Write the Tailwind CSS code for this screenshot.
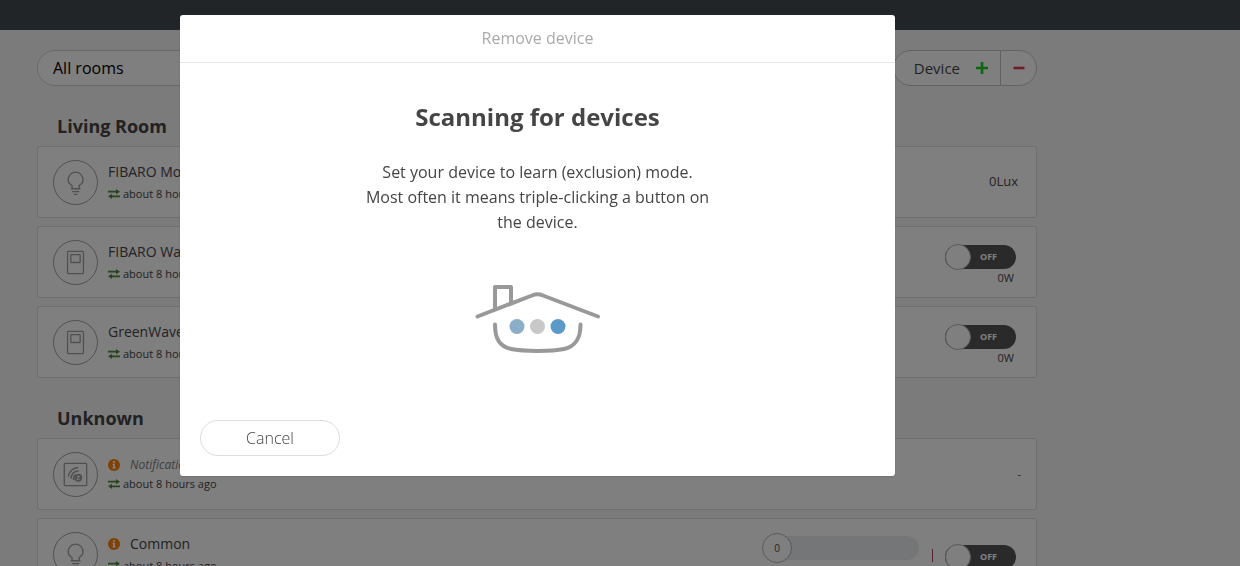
<!DOCTYPE html>
<html lang="en" class="h-full">
<head>
  <meta charset="UTF-8">
  <meta name="viewport" content="width=device-width, initial-scale=1.0">
  <title>Devices</title>
  <script src="https://cdn.jsdelivr.net/npm/@tailwindcss/browser@4"></script>
</head>
<body class="h-screen overflow-hidden bg-[#f7f7f7] font-['Open_Sans',sans-serif] text-[#454545]">

<!-- Shared icons -->
<svg class="hidden" aria-hidden="true">
  <symbol id="icon-bulb" viewBox="0 0 46 46">
    <g fill="none" stroke="currentColor" stroke-width="1.4" stroke-linecap="round" stroke-linejoin="round">
      <path d="M19.300 29.500v-3.300c-2.800-1.300-4.100-3.800-4.100-6.300a7.900 7.900 0 0 1 15.800 0c0 2.500-1.300 5-4.100 6.300v3.300M18.500 29.700h9.200"/>
      <path d="M19.800 32.800h6.600M21.700 35.800h2.800"/>
    </g>
  </symbol>
  <symbol id="icon-plug" viewBox="0 0 46 46">
    <g fill="none" stroke="currentColor" stroke-width="1.4">
      <rect x="14.500" y="11" width="17" height="24" rx="1"/>
      <rect x="18" y="14.500" width="10" height="8.500" rx=".5"/>
    </g>
  </symbol>
  <symbol id="icon-zwave" viewBox="0 0 46 46">
    <g fill="none" stroke="currentColor" stroke-width="1.4">
      <rect x="11" y="11" width="24" height="24" rx="1"/>
      <path stroke-width="1.6" d="M15.500 25.500a10.500 10.500 0 0 1 10.500-10M18.200 27.500a7.800 7.800 0 0 1 8.300-8.200M21 29a5 5 0 0 1 2-5.500"/>
    </g>
    <circle cx="26" cy="26.500" r="4.200" fill="currentColor"/>
    <path d="M24.500 25h3l-3 3h3" fill="none" stroke="#fff" stroke-width="1"/>
  </symbol>
  <symbol id="icon-arrows" viewBox="0 0 12 10">
    <path d="M0 1.800h8V0l4 2.700L8 5.200V3.500H0zM12 6.500H4V4.800L0 7.300 4 10V8.200h8z" fill="currentColor"/>
  </symbol>
  <symbol id="icon-info" viewBox="0 0 12 12">
    <circle cx="6" cy="6" r="6" fill="currentColor"/>
    <path d="M5 2h2v1.700H5zM4.500 4.700H7v3.600h.700v1.200H4.400V8.300h.700V5.900h-.600z" fill="#fff"/>
  </symbol>
</svg>

<header class="h-[30px] bg-[#434b51]"></header>

<main class="ml-[37px] max-w-[1000px] pt-5">
  <div class="flex items-center justify-between">
    <select aria-label="Room" class="h-9 w-[300px] appearance-none rounded-full border border-[#d0d0d0] bg-white px-[15px] text-base text-black">
      <option>All rooms</option>
    </select>
    <div class="flex h-9 rounded-full border border-[#c4c4c4] bg-white">
      <button type="button" class="flex items-center gap-4 pr-3 pl-5 text-[15px]">
        Device
        <svg class="size-3" viewBox="0 0 12 12" aria-hidden="true"><path d="M6 0v12M0 6h12" stroke="#18d018" stroke-width="2.600"/></svg>
      </button>
      <button type="button" aria-label="Remove device" class="flex w-9 items-center justify-center border-l border-[#c4c4c4]">
        <svg class="size-3" viewBox="0 0 12 12" aria-hidden="true"><path d="M.500 6h11" stroke="#e03c48" stroke-width="2.600"/></svg>
      </button>
    </div>
  </div>

  <h2 class="px-5 pt-7 pb-2 text-lg leading-6 font-bold">Living Room</h2>
  <ul class="space-y-2">
    <li class="flex h-[72px] items-center rounded-[3px] border border-[#dcdcdc] bg-white px-[15px]">
      <span class="size-[45px] shrink-0 rounded-full border border-[#a0a0a0] text-[#a0a0a0]"><svg class="size-[43px]"><use href="#icon-bulb"/></svg></span>
      <div class="ml-[10px] grow">
        <h3 class="text-sm leading-6">FIBARO Motion Sensor</h3>
        <p class="flex items-center gap-[3px] text-[11px] leading-5"><svg class="h-[10px] w-3 text-[#4c8c40]"><use href="#icon-arrows"/></svg>about 8 hours ago</p>
      </div>
      <span class="mr-[3px] text-[13px]">0Lux</span>
    </li>
    <li class="flex h-[72px] items-center rounded-[3px] border border-[#dcdcdc] bg-white px-[15px]">
      <span class="size-[45px] shrink-0 rounded-full border border-[#a0a0a0] text-[#a0a0a0]"><svg class="size-[43px]"><use href="#icon-plug"/></svg></span>
      <div class="ml-[10px] grow">
        <h3 class="text-sm leading-6">FIBARO Wall Plug</h3>
        <p class="flex items-center gap-[3px] text-[11px] leading-5"><svg class="h-[10px] w-3 text-[#4c8c40]"><use href="#icon-arrows"/></svg>about 8 hours ago</p>
      </div>
      <div class="mr-[5px] flex flex-col items-end pt-2">
        <label class="flex h-6 w-[71px] items-center rounded-full bg-[#555] text-[9px] font-bold text-white">
          <input type="checkbox" class="sr-only" aria-label="FIBARO Wall Plug">
          <span class="size-[26px] shrink-0 rounded-full border border-[#b4b4b4] bg-white"></span>
          <span class="ml-[9px]">OFF</span>
        </label>
        <span class="mr-0.5 text-[11px] leading-[18px]">0W</span>
      </div>
    </li>
    <li class="flex h-[72px] items-center rounded-[3px] border border-[#dcdcdc] bg-white px-[15px]">
      <span class="size-[45px] shrink-0 rounded-full border border-[#a0a0a0] text-[#a0a0a0]"><svg class="size-[43px]"><use href="#icon-plug"/></svg></span>
      <div class="ml-[10px] grow">
        <h3 class="text-sm leading-6">GreenWave PowerNode</h3>
        <p class="flex items-center gap-[3px] text-[11px] leading-5"><svg class="h-[10px] w-3 text-[#4c8c40]"><use href="#icon-arrows"/></svg>about 8 hours ago</p>
      </div>
      <div class="mr-[5px] flex flex-col items-end pt-2">
        <label class="flex h-6 w-[71px] items-center rounded-full bg-[#555] text-[9px] font-bold text-white">
          <input type="checkbox" class="sr-only" aria-label="GreenWave PowerNode">
          <span class="size-[26px] shrink-0 rounded-full border border-[#b4b4b4] bg-white"></span>
          <span class="ml-[9px]">OFF</span>
        </label>
        <span class="mr-0.5 text-[11px] leading-[18px]">0W</span>
      </div>
    </li>
  </ul>

  <h2 class="px-5 pt-7 pb-2 text-lg leading-6 font-bold">Unknown</h2>
  <ul class="space-y-2">
    <li class="flex h-[72px] items-center rounded-[3px] border border-[#dcdcdc] bg-white px-[15px]">
      <span class="size-[45px] shrink-0 rounded-full border border-[#a0a0a0] text-[#a0a0a0]"><svg class="size-[43px]"><use href="#icon-zwave"/></svg></span>
      <div class="ml-[10px] grow pt-0.5">
        <h3 class="flex items-center gap-[10px] text-xs leading-[18px] text-[#808080] italic"><svg class="size-3 text-[#ff8000]"><use href="#icon-info"/></svg>Notification</h3>
        <p class="flex items-center gap-[3px] text-[11px] leading-5"><svg class="h-[10px] w-3 text-[#4c8c40]"><use href="#icon-arrows"/></svg>about 8 hours ago</p>
      </div>
      <span class="text-[11px]">-</span>
    </li>
    <li class="flex h-[72px] items-center rounded-[3px] border border-[#dcdcdc] bg-white px-[15px]">
      <span class="size-[45px] shrink-0 rounded-full border border-[#a0a0a0] text-[#a0a0a0]"><svg class="size-[43px]"><use href="#icon-bulb"/></svg></span>
      <div class="ml-[10px] grow">
        <h3 class="flex items-center gap-[10px] text-sm leading-6"><svg class="size-3 text-[#ff8000]"><use href="#icon-info"/></svg>Common</h3>
        <p class="flex items-center gap-[3px] text-[11px] leading-5"><svg class="h-[10px] w-3 text-[#4c8c40]"><use href="#icon-arrows"/></svg>about 8 hours ago</p>
      </div>
      <label class="relative mb-3 flex h-6 w-[157px] items-center">
        <input type="range" min="0" max="99" value="0" aria-label="Level" class="ml-3 h-6 w-full appearance-none rounded-full bg-[#e9edf0]">
        <span class="absolute -top-[3px] left-0 flex size-[30px] items-center justify-center rounded-full border border-[#b4b4b4] bg-white text-[10px]">0</span>
      </label>
      <span class="mt-[2px] ml-[13px] h-[13px] w-px bg-[#a84468]"></span>
      <label class="mt-[6px] mr-[5px] ml-3 flex h-6 w-[71px] items-center rounded-full bg-[#555] text-[9px] font-bold text-white">
        <input type="checkbox" class="sr-only" aria-label="Common">
        <span class="size-[26px] shrink-0 rounded-full border border-[#b4b4b4] bg-white"></span>
        <span class="ml-[9px]">OFF</span>
      </label>
    </li>
  </ul>
</main>

<!-- Remove device modal -->
<div class="fixed inset-0 bg-black/50">
  <div class="ml-[37px] flex max-w-[1001px] justify-center pt-[15px]">
    <div role="dialog" aria-labelledby="modal-title" class="w-full max-w-[715px] rounded-[3px] bg-white shadow-sm">
      <div class="border-b border-[#e5e5e5] text-center">
        <h2 id="modal-title" class="text-base leading-[47px] text-[#aaa]">Remove device</h2>
      </div>
      <div class="flex flex-col items-center pt-[38px] text-center">
        <h3 class="text-2xl font-bold">Scanning for devices</h3>
        <p class="mt-[27px] max-w-[350px] text-base leading-[25px]">Set your device to learn (exclusion) mode. Most often it means triple-clicking a button on the device.</p>
        <svg class="mt-[45px] h-[80px] w-[130px]" viewBox="0 0 130 80" aria-hidden="true">
          <g fill="none" stroke="#999" stroke-width="4" stroke-linecap="round" stroke-linejoin="round">
            <path d="M4.500 36.500 59 15.500Q64.500 13 70 15.500L125 36.500"/>
            <path d="M22 29V7h16v16"/>
            <path d="M22 44.500c0 15 5 22 16 24.500 12 2.500 41 2.500 53 0 11-2.500 16.500-9.500 16.500-24.500"/>
          </g>
          <circle cx="44" cy="46.500" r="7.500" fill="#8aadc8"/>
          <circle cx="64.500" cy="46.500" r="7.500" fill="#c8c8c8"/>
          <circle cx="85" cy="46.500" r="7.500" fill="#5b9ac8"/>
        </svg>
      </div>
      <div class="px-5 pt-[60px] pb-5">
        <button type="button" class="h-9 w-[140px] rounded-full border border-[#ddd] text-base font-light">Cancel</button>
      </div>
    </div>
  </div>
</div>

</body>
</html>
